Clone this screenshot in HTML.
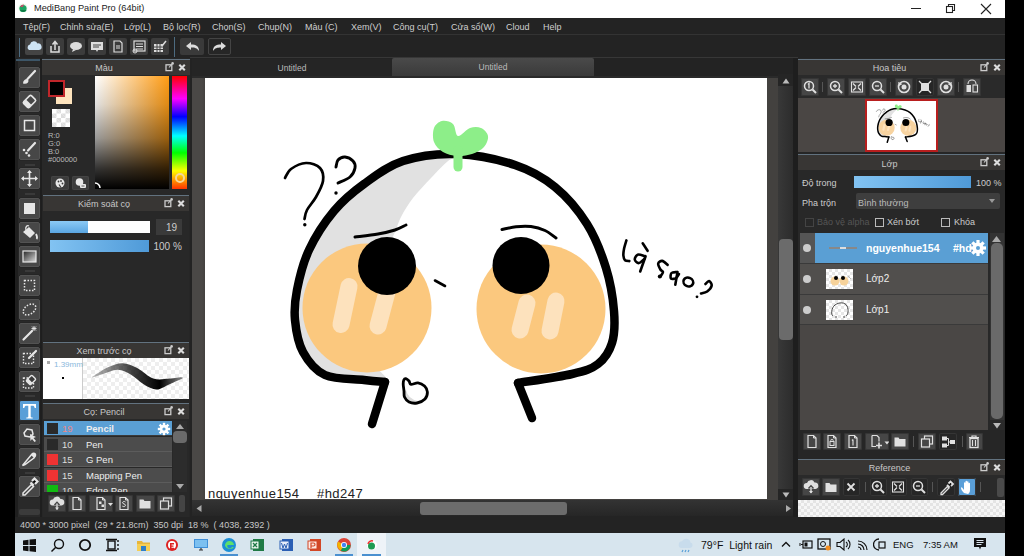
<!DOCTYPE html>
<html><head><meta charset="utf-8">
<style>
*{margin:0;padding:0;box-sizing:border-box}
html,body{width:1024px;height:556px;overflow:hidden;background:#000;font-family:"Liberation Sans",sans-serif;}
.a{position:absolute}
.t{position:absolute;white-space:nowrap;line-height:1}
#title{left:15px;top:0;width:990px;height:18px;background:#fff}
#menu{left:15px;top:18px;width:990px;height:16px;background:#232323}
#tb{left:15px;top:34px;width:990px;height:24px;background:#232323;border-top:1px solid #333}
#main{left:15px;top:58px;width:990px;height:459px;background:#232323;border-top:1px solid #353535}
#status{left:15px;top:517px;width:990px;height:16px;background:#232323}
#task{left:15px;top:533px;width:990px;height:23px;background:#d7e5ee}
.menu span{position:absolute;top:3.5px;font-size:9px;color:#cfcfcf}
.btn{position:absolute;width:19px;height:19px;background:#3c3c3c;border-radius:2px}
.ph{position:absolute;height:16px;background:#363636;border-top:1px solid #4d6b80;color:#ccc;font-size:9px;text-align:center;line-height:15px}
</style></head><body>
<svg width="0" height="0" style="position:absolute"><defs><linearGradient id="grd" x1="0" y1="0" x2="1" y2="1"><stop offset="0" stop-color="#222"/><stop offset="1" stop-color="#ddd"/></linearGradient></defs></svg>
<div id="title" class="a">
  <svg class="a" style="left:3px;top:2px" width="14" height="14"><circle cx="5" cy="6" r="4.5" fill="#eafaea"/><circle cx="5" cy="6.5" r="3.6" fill="#1ea463"/><path d="M2 5a3.6 3.6 0 0 1 4-2.5L5 5z" fill="#c0506a"/><path d="M2 8a3.6 3.6 0 0 0 6.5 0z" fill="#0d7a45"/></svg>
  <div class="t" style="left:19px;top:4px;font-size:9.2px;color:#222">MediBang Paint Pro (64bit)</div>
  <div class="a" style="left:896px;top:8px;width:10px;height:1px;background:#222"></div>
  <svg class="a" style="left:930px;top:3px" width="11" height="11"><rect x="1.5" y="3.5" width="6" height="6" fill="none" stroke="#222" stroke-width="1.1"/><path d="M3.5 3.5V1.5h6v6H7.5" fill="none" stroke="#222" stroke-width="1.1"/></svg>
  <svg class="a" style="left:965px;top:3px" width="12" height="12"><path d="M1 1l10 10M11 1L1 11" stroke="#222" stroke-width="1.1"/></svg>
</div>
<div id="menu" class="a menu">
  <span style="left:8px">Tệp(F)</span>
  <span style="left:45px">Chỉnh sửa(E)</span>
  <span style="left:109px">Lớp(L)</span>
  <span style="left:148px">Bộ lọc(R)</span>
  <span style="left:197px">Chọn(S)</span>
  <span style="left:243px">Chụp(N)</span>
  <span style="left:290px">Màu (C)</span>
  <span style="left:336px">Xem(V)</span>
  <span style="left:378px">Công cụ(T)</span>
  <span style="left:436px">Cửa sổ(W)</span>
  <span style="left:491px">Cloud</span>
  <span style="left:528px">Help</span>
</div>
<div id="tb" class="a">
  <div class="a" style="left:4px;top:3px;width:1px;height:19px;background:#4d6b80"></div>
  <div class="btn" style="left:10px;top:3px;width:18px;height:17px;background:#444"><svg width="18" height="17"><path d="M4 12 a3 3 0 0 1 1-5.5 a4 4 0 0 1 7.5-1 a3 3 0 0 1 1.5 6.5z" fill="#cfe4f5"/></svg></div>
  <div class="btn" style="left:31px;top:3px;width:18px;height:17px"><svg width="18" height="17"><path d="M5 8v6h8V8" fill="none" stroke="#ddd" stroke-width="1.5"/><path d="M9 12V4M6.5 6.5L9 3.5l2.5 3" fill="none" stroke="#ddd" stroke-width="1.5"/></svg></div>
  <div class="btn" style="left:52px;top:3px;width:18px;height:17px"><svg width="18" height="17"><ellipse cx="9" cy="8" rx="6" ry="4" fill="#ddd"/><path d="M6 11l-1 3 4-2z" fill="#ddd"/></svg></div>
  <div class="btn" style="left:73px;top:3px;width:18px;height:17px"><svg width="18" height="17"><rect x="3" y="4" width="12" height="8" fill="#ddd"/><path d="M8 12l1 2 1-2z" fill="#ddd"/><path d="M5 7h8M5 9h6" stroke="#444" stroke-width="1"/></svg></div>
  <div class="btn" style="left:94px;top:3px;width:18px;height:17px"><svg width="18" height="17"><path d="M5 3h6l2 2v9H5z" fill="none" stroke="#ddd" stroke-width="1.2"/><path d="M7 8h4M7 10h4" stroke="#ddd"/></svg></div>
  <div class="btn" style="left:115px;top:3px;width:18px;height:17px"><svg width="18" height="17"><rect x="4" y="3" width="11" height="10" fill="none" stroke="#ddd" stroke-width="1.2"/><path d="M6 6h7M6 8.5h7M6 11h7" stroke="#ddd"/><circle cx="5" cy="13" r="2" fill="none" stroke="#ddd"/></svg></div>
  <div class="btn" style="left:136px;top:3px;width:18px;height:17px"><svg width="18" height="17"><path d="M3 6h9v8H3z" fill="#ddd"/><path d="M3 9h9M3 11.5h9M6 6v8M9 6v8" stroke="#444"/><path d="M11 8l4-5" stroke="#ddd" stroke-width="1.5"/></svg></div>
  <div class="a" style="left:159px;top:2px;width:1px;height:20px;background:#4d6b80"></div>
  <div class="btn" style="left:165px;top:3px;width:24px;height:17px;background:#3a3a3a"><svg width="24" height="17"><path d="M6 8 L11 4 V6.5 C16 6.5 19 8 19 13 C17 10 15 9.5 11 9.5 V12z" fill="#ddd"/></svg></div>
  <div class="btn" style="left:193px;top:3px;width:23px;height:17px;background:#262626;border:1px solid #444"><svg width="22" height="16"><path d="M17 7 L12 3 V5.5 C7 5.5 4 7 4 12 C6 9 8 8.5 12 8.5 V11z" fill="#ddd"/></svg></div>
</div>
<div id="main" class="a"></div>
<div class="a" style="left:15px;top:58px;width:27px;height:459px;background:#292929;border-left:3px solid #1e1e1e;border-right:2px solid #1e1e1e"></div>
<div class="a" style="left:16px;top:59px;width:24px;height:2px;background:#3d5668"></div>
<div class="btn" id="tool67" style="left:19px;top:67px;width:21px;height:21px;background:#474747;border:1px solid #535353;box-shadow:0 0 0 0.5px #222"><svg width="19" height="19" viewBox="1 1 19 19" style="position:absolute;left:0;top:0"><path d="M16 4L8.5 12" stroke="#e6e6e6" stroke-width="2.2" stroke-linecap="round"/><path d="M4 16.5c0-3 2-4.5 4-4.5l1.5 1.5c0 2-1.5 4-5.5 3z" fill="#e6e6e6"/></svg></div>
<div class="btn" id="tool91" style="left:19px;top:91px;width:21px;height:21px;background:#474747;border:1px solid #535353;box-shadow:0 0 0 0.5px #222"><svg width="19" height="19" viewBox="1 1 19 19" style="position:absolute;left:0;top:0"><g transform="rotate(-45 10.5 10.5)"><rect x="5" y="6.5" width="11" height="8" rx="1.5" fill="none" stroke="#e6e6e6" stroke-width="1.6"/><rect x="5" y="6.5" width="4.5" height="8" fill="#e6e6e6"/></g></svg></div>
<div class="btn" id="tool115" style="left:19px;top:115px;width:21px;height:21px;background:#474747;border:1px solid #535353;box-shadow:0 0 0 0.5px #222"><svg width="19" height="19" viewBox="1 1 19 19" style="position:absolute;left:0;top:0"><rect x="5.5" y="5.5" width="10" height="10" fill="none" stroke="#e6e6e6" stroke-width="1.5"/></svg></div>
<div class="btn" id="tool139" style="left:19px;top:139px;width:21px;height:21px;background:#474747;border:1px solid #535353;box-shadow:0 0 0 0.5px #222"><svg width="19" height="19" viewBox="1 1 19 19" style="position:absolute;left:0;top:0"><path d="M16 4l-7 7.5" stroke="#e6e6e6" stroke-width="2.2" stroke-linecap="round"/><circle cx="5" cy="11" r="1.3" fill="#e6e6e6"/><circle cx="7.5" cy="14" r="1.3" fill="#e6e6e6"/><circle cx="10" cy="16.5" r="1.3" fill="#e6e6e6"/></svg></div>
<div class="btn" id="tool168" style="left:19px;top:168px;width:21px;height:21px;background:#474747;border:1px solid #535353;box-shadow:0 0 0 0.5px #222"><svg width="19" height="19" viewBox="1 1 19 19" style="position:absolute;left:0;top:0"><path d="M10.5 3v15M3 10.5h15" stroke="#e6e6e6" stroke-width="1.6"/><path d="M10.5 2l-2.5 3h5zM10.5 19l-2.5-3h5zM2 10.5l3-2.5v5zM19 10.5l-3-2.5v5z" fill="#e6e6e6"/></svg></div>
<div class="btn" id="tool198" style="left:19px;top:198px;width:21px;height:21px;background:#474747;border:1px solid #535353;box-shadow:0 0 0 0.5px #222"><svg width="19" height="19" viewBox="1 1 19 19" style="position:absolute;left:0;top:0"><rect x="5" y="5" width="11" height="11" fill="#e6e6e6"/></svg></div>
<div class="btn" id="tool222" style="left:19px;top:222px;width:21px;height:21px;background:#474747;border:1px solid #535353;box-shadow:0 0 0 0.5px #222"><svg width="19" height="19" viewBox="1 1 19 19" style="position:absolute;left:0;top:0"><path d="M4 10l6-5 6 6-5 5z" fill="#e6e6e6"/><path d="M7 8c-1-3 1-5 3-4" fill="none" stroke="#e6e6e6" stroke-width="1.3"/><path d="M17 12c1 2 1.5 4 0.5 5" stroke="#e6e6e6" stroke-width="1.8" fill="none"/></svg></div>
<div class="btn" id="tool246" style="left:19px;top:246px;width:21px;height:21px;background:#474747;border:1px solid #535353;box-shadow:0 0 0 0.5px #222"><svg width="19" height="19" viewBox="1 1 19 19" style="position:absolute;left:0;top:0"><rect x="4" y="5" width="13" height="11" fill="url(#grd)" stroke="#e6e6e6" stroke-width="1.2"/></svg></div>
<div class="btn" id="tool275" style="left:19px;top:275px;width:21px;height:21px;background:#474747;border:1px solid #535353;box-shadow:0 0 0 0.5px #222"><svg width="19" height="19" viewBox="1 1 19 19" style="position:absolute;left:0;top:0"><rect x="5.5" y="5.5" width="10" height="10" fill="none" stroke="#e6e6e6" stroke-width="1.5" stroke-dasharray="1.5 1.5"/></svg></div>
<div class="btn" id="tool299" style="left:19px;top:299px;width:21px;height:21px;background:#474747;border:1px solid #535353;box-shadow:0 0 0 0.5px #222"><svg width="19" height="19" viewBox="1 1 19 19" style="position:absolute;left:0;top:0"><ellipse cx="10.5" cy="10.5" rx="7" ry="4.5" transform="rotate(-35 10.5 10.5)" fill="none" stroke="#e6e6e6" stroke-width="1.5" stroke-dasharray="1.5 1.5"/></svg></div>
<div class="btn" id="tool323" style="left:19px;top:323px;width:21px;height:21px;background:#474747;border:1px solid #535353;box-shadow:0 0 0 0.5px #222"><svg width="19" height="19" viewBox="1 1 19 19" style="position:absolute;left:0;top:0"><path d="M4.5 16.5L13 8" stroke="#e6e6e6" stroke-width="2.2" stroke-linecap="round"/><path d="M15 3v5M12.5 5.5h5M13 3.5l4 4M17 3.5l-4 4" stroke="#e6e6e6" stroke-width="0.9"/></svg></div>
<div class="btn" id="tool347" style="left:19px;top:347px;width:21px;height:21px;background:#474747;border:1px solid #535353;box-shadow:0 0 0 0.5px #222"><svg width="19" height="19" viewBox="1 1 19 19" style="position:absolute;left:0;top:0"><rect x="4.5" y="6.5" width="10" height="10" fill="none" stroke="#e6e6e6" stroke-width="1.4" stroke-dasharray="1.5 1.5"/><path d="M17 4l-7 7" stroke="#e6e6e6" stroke-width="2.2" stroke-linecap="round"/></svg></div>
<div class="btn" id="tool371" style="left:19px;top:371px;width:21px;height:21px;background:#474747;border:1px solid #535353;box-shadow:0 0 0 0.5px #222"><svg width="19" height="19" viewBox="1 1 19 19" style="position:absolute;left:0;top:0"><rect x="4.5" y="7" width="10" height="10" fill="none" stroke="#e6e6e6" stroke-width="1.4" stroke-dasharray="1.5 1.5"/><g transform="rotate(-45 12 9)"><rect x="8" y="6" width="8" height="6" rx="1" fill="#3b3b3b" stroke="#e6e6e6" stroke-width="1.4"/><rect x="8" y="6" width="3" height="6" fill="#e6e6e6"/></g></svg></div>
<div class="btn" id="tool400" style="left:19px;top:400px;width:21px;height:21px;background:#5a9fd8;border:1px solid #2e2e2e"><svg width="19" height="19" viewBox="1 1 19 19" style="position:absolute;left:0;top:0"><path d="M4 4h13v4h-1.3c-.3-1.6-.8-2.2-2.4-2.2h-1.6v10.4c0 1 .4 1.3 2 1.3V18.5H7.3V17.5c1.6 0 2-.3 2-1.3V5.8H7.7c-1.6 0-2.1.6-2.4 2.2H4z" fill="#fff"/></svg></div>
<div class="btn" id="tool424" style="left:19px;top:424px;width:21px;height:21px;background:#474747;border:1px solid #535353;box-shadow:0 0 0 0.5px #222"><svg width="19" height="19" viewBox="1 1 19 19" style="position:absolute;left:0;top:0"><path d="M5 9l3-4 5 1 1 4-3 3-5-1z" fill="none" stroke="#e6e6e6" stroke-width="1.5"/><path d="M11 10l6 3-2.5 1 2.5 3-1.5 1-2.5-3-1.5 2z" fill="#e6e6e6"/></svg></div>
<div class="btn" id="tool448" style="left:19px;top:448px;width:21px;height:21px;background:#474747;border:1px solid #535353;box-shadow:0 0 0 0.5px #222"><svg width="19" height="19" viewBox="1 1 19 19" style="position:absolute;left:0;top:0"><path d="M3.5 17.5L13 6c1-1 3-1 3.5.5s-.5 2.5-1.5 3.5L6 16.5z" fill="none" stroke="#e6e6e6" stroke-width="1.5"/><path d="M13 6c1-1 3-1 3.5.5s-.5 2.5-1.5 3.5l-3-3z" fill="#e6e6e6"/></svg></div>
<div class="btn" id="tool476" style="left:19px;top:476px;width:21px;height:21px;background:#474747;border:1px solid #535353;box-shadow:0 0 0 0.5px #222"><svg width="19" height="19" viewBox="1 1 19 19" style="position:absolute;left:0;top:0"><path d="M4 17l8.5-8.5 2 2L6 19H4z" fill="none" stroke="#e6e6e6" stroke-width="1.5"/><path d="M11.5 6.5l3 3M13 5l2.5-2.5 3 3L16 8" stroke="#e6e6e6" stroke-width="2.2"/></svg></div>
<div class="a" style="left:25px;top:164px;width:10px;height:2px;background:#3a3a3a"></div>
<div class="a" style="left:25px;top:193px;width:10px;height:2px;background:#3a3a3a"></div>
<div class="a" style="left:25px;top:270px;width:10px;height:2px;background:#3a3a3a"></div>
<div class="a" style="left:25px;top:395px;width:10px;height:2px;background:#3a3a3a"></div>
<div class="a" style="left:25px;top:472px;width:10px;height:2px;background:#3a3a3a"></div>
<div class="a" style="left:19px;top:509px;width:21px;height:6px;background:#3b3b3b;border-radius:2px"></div>
<div class="a" style="left:42px;top:58px;width:148px;height:459px;background:#262626"></div>
<div class="a" style="left:42px;top:59px;width:148px;height:16px;background:#383634;border-top:1px solid #62727f"></div><div class="t" style="left:42px;top:64px;width:124px;text-align:center;font-size:9px;color:#c8c8c8">Màu</div><svg class="a" style="left:164px;top:61px" width="24" height="12"><rect x="2" y="3.8" width="5.8" height="5.8" fill="none" stroke="#ccc" stroke-width="1.3"/><path d="M5 6.5L8 3" stroke="#ccc" stroke-width="1.1"/><circle cx="8.6" cy="2.4" r="1.3" fill="#ccc"/><path d="M15.3 3.8l5.5 5.5M20.8 3.8l-5.5 5.5" stroke="#ddd" stroke-width="2.1"/></svg>
<div class="a" style="left:42px;top:75px;width:148px;height:120px;background:#282828"></div>
<div class="a" style="left:56px;top:88px;width:16px;height:16px;background:#fde3bd"></div>
<div class="a" style="left:48px;top:80px;width:17px;height:17px;background:#000;border:2px solid #c0262a"></div>
<div class="a" style="left:52px;top:109px;width:18px;height:18px;background:#fff;background-image:linear-gradient(45deg,#ddd 25%,transparent 25%,transparent 75%,#ddd 75%),linear-gradient(45deg,#ddd 25%,transparent 25%,transparent 75%,#ddd 75%);background-size:9px 9px;background-position:0 0,4.5px 4.5px"></div>
<div class="t" style="left:48px;top:132px;font-size:7.5px;color:#bbb">R:0</div>
<div class="t" style="left:48px;top:140px;font-size:7.5px;color:#bbb">G:0</div>
<div class="t" style="left:48px;top:148px;font-size:7.5px;color:#bbb">B:0</div>
<div class="t" style="left:48px;top:156px;font-size:7.5px;color:#bbb">#000000</div>
<div class="btn" style="left:51px;top:176px;width:18px;height:14px;background:#3c3c3c;box-shadow:inset 0 0 0 1px #444"><svg width="18" height="14" style="position:absolute;left:0;top:0"><circle cx="9" cy="7" r="4.5" fill="#e8e8e8"/><circle cx="7.5" cy="5.5" r="0.9" fill="#3a3a3a"/><circle cx="10" cy="5" r="0.9" fill="#3a3a3a"/><circle cx="11.5" cy="7.5" r="0.9" fill="#3a3a3a"/><path d="M8 8.5l2 3" stroke="#3a3a3a" stroke-width="1.2"/></svg></div>
<div class="btn" style="left:72px;top:176px;width:17px;height:14px;background:#3c3c3c;box-shadow:inset 0 0 0 1px #444"><svg width="17" height="14" style="position:absolute;left:0;top:0"><circle cx="7.5" cy="6" r="3.8" fill="#e8e8e8"/><rect x="8" y="8" width="6" height="4" rx="1" fill="#e8e8e8"/><path d="M9.5 10h3" stroke="#3a3a3a" stroke-width="0.8"/></svg></div>
<div class="a" style="left:95px;top:76px;width:74px;height:113px;background:linear-gradient(to bottom,rgba(0,0,0,0) 0%,rgba(0,0,0,.12) 25%,rgba(0,0,0,.4) 55%,rgba(0,0,0,.8) 82%,#000 100%),linear-gradient(to right,#fff,#ff9c14)"></div>
<div class="a" style="left:172px;top:76px;width:15px;height:113px;background:linear-gradient(to bottom,#f00 0%,#f0f 20%,#00f 36%,#0ff 53%,#0f0 68%,#ff0 84%,#f30 100%)"></div>
<div class="a" style="left:175px;top:173px;width:10px;height:10px;border-radius:50%;border:2px solid #f5d89a"></div>
<svg class="a" style="left:93px;top:181px" width="10" height="10"><path d="M2 2a5 5 0 0 1 5 5" fill="none" stroke="#fff" stroke-width="1.5"/></svg>
<div class="a" style="left:43px;top:195px;width:146px;height:16px;background:#383634;border-top:1px solid #62727f"></div><div class="t" style="left:43px;top:200px;width:122px;text-align:center;font-size:9px;color:#c8c8c8">Kiểm soát cọ</div><svg class="a" style="left:163px;top:197px" width="24" height="12"><rect x="2" y="3.8" width="5.8" height="5.8" fill="none" stroke="#ccc" stroke-width="1.3"/><path d="M5 6.5L8 3" stroke="#ccc" stroke-width="1.1"/><circle cx="8.6" cy="2.4" r="1.3" fill="#ccc"/><path d="M15.3 3.8l5.5 5.5M20.8 3.8l-5.5 5.5" stroke="#ddd" stroke-width="2.1"/></svg>
<div class="a" style="left:43px;top:211px;width:146px;height:130px;background:#282828"></div>
<div class="a" style="left:50px;top:221px;width:100px;height:12px;background:#fff"></div>
<div class="a" style="left:50px;top:221px;width:38px;height:12px;background:linear-gradient(#8ccaf5,#5aa6e2)"></div>
<div class="a" style="left:156px;top:219px;width:26px;height:16px;background:#3a3a3a"></div>
<div class="t" style="left:156px;top:222.5px;width:21px;text-align:right;font-size:10px;color:#ccc">19</div>
<div class="a" style="left:50px;top:240px;width:99px;height:12px;background:linear-gradient(to right,#82c3f2,#4f9ad8)"></div>
<div class="t" style="left:153.5px;top:241.5px;font-size:10px;color:#ccc">100 %</div>
<div class="a" style="left:43px;top:342px;width:146px;height:16px;background:#383634;border-top:1px solid #62727f"></div><div class="t" style="left:43px;top:347px;width:122px;text-align:center;font-size:9px;color:#c8c8c8">Xem trước cọ</div><svg class="a" style="left:163px;top:344px" width="24" height="12"><rect x="2" y="3.8" width="5.8" height="5.8" fill="none" stroke="#ccc" stroke-width="1.3"/><path d="M5 6.5L8 3" stroke="#ccc" stroke-width="1.1"/><circle cx="8.6" cy="2.4" r="1.3" fill="#ccc"/><path d="M15.3 3.8l5.5 5.5M20.8 3.8l-5.5 5.5" stroke="#ddd" stroke-width="2.1"/></svg>
<div class="a" style="left:43px;top:358px;width:146px;height:41px;background:#fff;background-image:linear-gradient(45deg,#eee 25%,transparent 25%,transparent 75%,#eee 75%),linear-gradient(45deg,#eee 25%,transparent 25%,transparent 75%,#eee 75%);background-size:8px 8px;background-position:0 0,4px 4px"></div>
<div class="a" style="left:43px;top:358px;width:40px;height:41px;background:#fff;border-right:1px solid #ccc"></div>
<div class="t" style="left:54px;top:361px;font-size:8px;color:#8ab8dc">1.39mm</div>
<div class="a" style="left:47px;top:361px;width:3px;height:3px;background:#aaa"></div>
<div class="a" style="left:62px;top:377px;width:2px;height:2px;background:#000"></div>
<svg class="a" style="left:83px;top:358px" width="106" height="41"><defs><linearGradient id="bg1" x1="0" x2="1"><stop offset="0" stop-color="#000" stop-opacity="0.25"/><stop offset="0.45" stop-color="#000" stop-opacity="0.75"/><stop offset="0.75" stop-color="#000"/><stop offset="1" stop-color="#000" stop-opacity="0.45"/></linearGradient></defs><path d="M8.8 19.0 C11.5 17.4 19.9 11.5 25.0 9.2 C30.1 6.9 34.7 5.1 39.6 5.2 C44.5 5.3 49.1 7.4 54.2 10.0 C59.3 12.6 65.0 18.8 70.4 20.6 C75.8 22.4 81.8 20.9 86.6 20.6 C91.4 20.3 97.3 19.3 99.5 19.0 L99.5 20.6 C97.3 21.6 90.9 24.5 86.6 26.3 C82.3 28.1 77.9 31.6 73.6 31.6 C69.3 31.6 64.9 28.8 60.6 26.3 C56.3 23.8 52.0 18.9 47.7 16.5 C43.4 14.1 39.6 11.7 34.7 11.7 C29.8 11.7 22.8 15.2 18.5 16.5 C14.2 17.9 10.4 19.2 8.8 19.8Z" fill="url(#bg1)"/></svg>
<div class="a" style="left:43px;top:403px;width:146px;height:16px;background:#383634;border-top:1px solid #62727f"></div><div class="t" style="left:43px;top:408px;width:122px;text-align:center;font-size:9px;color:#c8c8c8">Cọ: Pencil</div><svg class="a" style="left:163px;top:405px" width="24" height="12"><rect x="2" y="3.8" width="5.8" height="5.8" fill="none" stroke="#ccc" stroke-width="1.3"/><path d="M5 6.5L8 3" stroke="#ccc" stroke-width="1.1"/><circle cx="8.6" cy="2.4" r="1.3" fill="#ccc"/><path d="M15.3 3.8l5.5 5.5M20.8 3.8l-5.5 5.5" stroke="#ddd" stroke-width="2.1"/></svg>
<div class="a" style="left:43px;top:419px;width:146px;height:98px;background:#282828"></div>
<div class="a" style="left:44px;top:421px;width:128px;height:71px;overflow:hidden">
<div class="a" style="left:0;top:0.0px;width:128px;height:15px;background:#5a9fd4;border-bottom:1px solid #3a3a3a"></div>
<div class="a" style="left:3px;top:2.0px;width:11px;height:11px;background:#2a2a2a"></div>
<div class="t" style="left:18px;top:3.0px;font-size:9.5px;color:#e88">19</div>
<div class="t" style="left:42px;top:3.0px;font-size:9.5px;color:#eee;font-weight:bold">Pencil</div>
<div class="a" style="left:0;top:15.5px;width:128px;height:15px;background:#4c4c4c;border-bottom:1px solid #5c5c5c"></div>
<div class="a" style="left:3px;top:17.5px;width:11px;height:11px;background:#2a2a2a"></div>
<div class="t" style="left:18px;top:18.5px;font-size:9.5px;color:#ddd">10</div>
<div class="t" style="left:42px;top:18.5px;font-size:9.5px;color:#eee;font-weight:normal">Pen</div>
<div class="a" style="left:0;top:31.0px;width:128px;height:15px;background:#4c4c4c;border-bottom:1px solid #5c5c5c"></div>
<div class="a" style="left:3px;top:33.0px;width:11px;height:11px;background:#e33"></div>
<div class="t" style="left:18px;top:34.0px;font-size:9.5px;color:#ddd">15</div>
<div class="t" style="left:42px;top:34.0px;font-size:9.5px;color:#eee;font-weight:normal">G Pen</div>
<div class="a" style="left:0;top:46.5px;width:128px;height:15px;background:#4c4c4c;border-bottom:1px solid #5c5c5c"></div>
<div class="a" style="left:3px;top:48.5px;width:11px;height:11px;background:#e33"></div>
<div class="t" style="left:18px;top:49.5px;font-size:9.5px;color:#ddd">15</div>
<div class="t" style="left:42px;top:49.5px;font-size:9.5px;color:#eee;font-weight:normal">Mapping Pen</div>
<div class="a" style="left:0;top:62.0px;width:128px;height:15px;background:#4c4c4c;border-bottom:1px solid #5c5c5c"></div>
<div class="a" style="left:3px;top:64.0px;width:11px;height:11px;background:#1b1"></div>
<div class="t" style="left:18px;top:65.0px;font-size:9.5px;color:#ddd">10</div>
<div class="t" style="left:42px;top:65.0px;font-size:9.5px;color:#eee;font-weight:normal">Edge Pen</div>
</div>
<svg class="a" style="left:157px;top:422px" width="14" height="14"><g transform="translate(7 7)" fill="#fff"><rect x="-1.2" y="-6.2" width="2.4" height="3" transform="rotate(0)"/><rect x="-1.2" y="-6.2" width="2.4" height="3" transform="rotate(45)"/><rect x="-1.2" y="-6.2" width="2.4" height="3" transform="rotate(90)"/><rect x="-1.2" y="-6.2" width="2.4" height="3" transform="rotate(135)"/><rect x="-1.2" y="-6.2" width="2.4" height="3" transform="rotate(180)"/><rect x="-1.2" y="-6.2" width="2.4" height="3" transform="rotate(225)"/><rect x="-1.2" y="-6.2" width="2.4" height="3" transform="rotate(270)"/><rect x="-1.2" y="-6.2" width="2.4" height="3" transform="rotate(315)"/><circle r="4.2"/></g><circle cx="7" cy="7" r="1.6" fill="#5a9fd4"/></svg><div class="a" style="left:173px;top:421px;width:14px;height:71px;background:#2c2c2c"></div><svg class="a" style="left:173px;top:422px" width="14" height="9"><path d="M3 7h8l-4-5z" fill="#aaa"/></svg><div class="a" style="left:173px;top:431px;width:14px;height:12px;background:#6a6a6a;border-radius:4px"></div><svg class="a" style="left:173px;top:482px" width="14" height="9"><path d="M3 2h8l-4 5z" fill="#aaa"/></svg>
<div class="btn" style="left:48px;top:495px;width:18px;height:17px;background:#464646;box-shadow:inset 0 0 0 1px #353535"><svg width="18" height="17" style="position:absolute;left:0;top:0"><g transform="translate(0 -0.5)"><path d="M4.5 11a3 3 0 0 1 .5-6a4 4 0 0 1 7.5-.5a3 3 0 0 1 1 6.5z" fill="#e0e0e0"/><path d="M9 8v7M6.5 10.5L9 8l2.5 2.5" stroke="#464646" stroke-width="1.6" fill="none"/><path d="M9 9v6" stroke="#e0e0e0" stroke-width="1.4"/><path d="M7 13l2 2.5 2-2.5" fill="#e0e0e0"/></g></svg></div>
<div class="btn" style="left:68px;top:495px;width:18px;height:17px;background:#464646;box-shadow:inset 0 0 0 1px #353535"><svg width="18" height="17" style="position:absolute;left:0;top:0"><g transform="translate(0 -0.5)"><path d="M5 3h5.5L13 5.5V15H5z" fill="none" stroke="#e0e0e0" stroke-width="1.2"/><path d="M10.5 3v2.5H13" fill="none" stroke="#e0e0e0" stroke-width="1"/></g></svg></div>
<div class="btn" style="left:89px;top:495px;width:24px;height:17px;background:#464646;box-shadow:inset 0 0 0 1px #353535"><svg width="24" height="17" style="position:absolute;left:0;top:0"><g transform="translate(3 -0.5)"><path d="M5 3h5.5L13 5.5V15H5z" fill="none" stroke="#e0e0e0" stroke-width="1.2"/><path d="M10.5 3v2.5H13" fill="none" stroke="#e0e0e0" stroke-width="1"/><rect x="7" y="7" width="2.5" height="2.5" fill="#e0e0e0"/><rect x="9.5" y="10" width="2.5" height="2.5" fill="#e0e0e0"/><path d="M16 8.5h5l-2.5 3z" fill="#e0e0e0"/></g></svg></div>
<div class="btn" style="left:115px;top:495px;width:18px;height:17px;background:#464646;box-shadow:inset 0 0 0 1px #353535"><svg width="18" height="17" style="position:absolute;left:0;top:0"><g transform="translate(0 -0.5)"><path d="M5 3h5.5L13 5.5V15H5z" fill="none" stroke="#e0e0e0" stroke-width="1.2"/><path d="M10.5 3v2.5H13" fill="none" stroke="#e0e0e0" stroke-width="1"/><path d="M10.5 7.5c-1-1-3-.5-3 .8s3 .9 3 2.4-2.2 1.8-3.2.9" fill="none" stroke="#e0e0e0" stroke-width="1"/></g></svg></div>
<div class="btn" style="left:136px;top:495px;width:19px;height:17px;background:#464646;box-shadow:inset 0 0 0 1px #353535"><svg width="19" height="17" style="position:absolute;left:0;top:0"><g transform="translate(0 -0.5)"><path d="M3.5 5h4l1 1.5h6V14h-11z" fill="#e0e0e0"/></g></svg></div>
<div class="btn" style="left:157px;top:495px;width:18px;height:17px;background:#464646;box-shadow:inset 0 0 0 1px #353535"><svg width="18" height="17" style="position:absolute;left:0;top:0"><g transform="translate(0 -0.5)"><rect x="6.5" y="3.5" width="8" height="8" fill="none" stroke="#e0e0e0" stroke-width="1.2"/><rect x="3.5" y="6.5" width="8" height="8" fill="#464646" stroke="#e0e0e0" stroke-width="1.2"/></g></svg></div>
<div class="a" style="left:179px;top:495px;width:6px;height:17px;background:#444;border-radius:2px"></div>
<div class="a" style="left:190px;top:58px;width:608px;height:459px;background:#232323"></div>
<div class="a" style="left:190px;top:57px;width:608px;height:1px;background:#373737"></div>
<div class="a" style="left:192px;top:59px;width:200px;height:17px;background:#252525"></div>
<div class="t" style="left:192px;top:64px;width:200px;text-align:center;font-size:8.5px;color:#bbb">Untitled</div>
<div class="a" style="left:392px;top:58px;width:202px;height:18px;background:linear-gradient(#4a4a4a,#3a3a3a);border-radius:2px 2px 0 0"></div>
<div class="t" style="left:392px;top:63px;width:202px;text-align:center;font-size:8.5px;color:#bbb">Untitled</div>
<div class="a" style="left:192px;top:76px;width:601px;height:424px;background:linear-gradient(to right,#4a4846 0,#4a4846 10px,#43413f 13px,#43413f 586px,#4a4846 586px)"></div>
<div class="a" style="left:192px;top:76px;width:586px;height:2px;background:#2a2a2a"></div>
<div id="canvas" class="a" style="left:205px;top:78px;width:562px;height:421px;background:#fff;overflow:hidden"><!--DRAW--><svg width="562" height="421" viewBox="205 78 562 421"><path d="M456.0 156.0 C448.0 156.2 417.7 156.3 400.0 162.0 C382.3 167.7 364.3 177.2 350.0 190.0 C335.7 202.8 322.8 221.3 314.0 239.0 C305.2 256.7 299.3 278.3 297.0 296.0 C294.7 313.7 295.3 332.2 300.0 345.0 C304.7 357.8 310.8 367.2 325.0 373.0 C339.2 378.8 379.2 383.8 385.0 380.0 C390.8 376.2 365.8 363.3 360.0 350.0 C354.2 336.7 347.5 315.3 350.0 300.0 C352.5 284.7 368.0 268.3 375.0 258.0 C382.0 247.7 387.7 244.8 392.0 238.0 C396.3 231.2 397.5 223.7 401.0 217.0 C404.5 210.3 408.0 204.5 413.0 198.0 C418.0 191.5 425.2 184.2 431.0 178.0 C436.8 171.8 443.8 164.7 448.0 161.0 C452.2 157.3 464.0 155.8 456.0 156.0Z" fill="#e1e1e1"/>
<circle cx="367" cy="308" r="64.5" fill="#fbc87e"/>
<circle cx="541" cy="309" r="64.5" fill="#fbc87e"/>
<path d="M349 286.5L341 324.5" stroke="#fde2bd" stroke-width="17" stroke-linecap="round"/>
<path d="M387 292L378 326" stroke="#fde2bd" stroke-width="17" stroke-linecap="round"/>
<path d="M527 303L520 330" stroke="#fde2bd" stroke-width="17" stroke-linecap="round"/>
<path d="M556 301L550 331" stroke="#fde2bd" stroke-width="17" stroke-linecap="round"/>
<circle cx="387" cy="266" r="29" fill="#000"/>
<circle cx="521" cy="265.5" r="28.5" fill="#000"/>
<path d="M372 424L385 382" stroke="#000" stroke-width="8.5" stroke-linecap="round" fill="none"/>
<path d="M385.0 382.0 C381.5 381.7 374.0 381.2 364.0 380.0 C354.0 378.8 335.2 379.7 325.0 375.0 C314.8 370.3 308.0 361.2 303.0 352.0 C298.0 342.8 296.0 330.3 295.0 320.0 C294.0 309.7 294.7 301.7 297.0 290.0 C299.3 278.3 302.8 263.2 309.0 250.0 C315.2 236.8 324.8 222.0 334.0 211.0 C343.2 200.0 352.5 192.3 364.0 184.0 C375.5 175.7 387.7 166.0 403.0 161.0 C418.3 156.0 437.3 153.3 456.0 154.0 C474.7 154.7 498.5 159.5 515.0 165.0 C531.5 170.5 543.0 177.2 555.0 187.0 C567.0 196.8 578.5 210.5 587.0 224.0 C595.5 237.5 601.5 253.5 606.0 268.0 C610.5 282.5 613.0 298.5 614.0 311.0 C615.0 323.5 614.7 334.2 612.0 343.0 C609.3 351.8 604.7 358.8 598.0 364.0 C591.3 369.2 585.3 370.8 572.0 374.0 C558.7 377.2 527.0 381.5 518.0 383.0" stroke="#000" stroke-width="8.5" stroke-linecap="round" stroke-linejoin="round" fill="none"/>
<path d="M518 383L532 418" stroke="#000" stroke-width="8.5" stroke-linecap="round" fill="none"/>
<path d="M458.0 136.0 C455.2 135.3 455.7 126.5 453.0 124.0 C450.3 121.5 445.2 120.3 442.0 121.0 C438.8 121.7 435.3 124.5 434.0 128.0 C432.7 131.5 432.5 138.0 434.0 142.0 C435.5 146.0 439.2 149.7 443.0 152.0 C446.8 154.3 452.2 155.7 457.0 156.0 C461.8 156.3 467.5 155.5 472.0 154.0 C476.5 152.5 481.3 150.0 484.0 147.0 C486.7 144.0 488.5 139.2 488.0 136.0 C487.5 132.8 484.0 129.3 481.0 128.0 C478.0 126.7 473.8 126.7 470.0 128.0 C466.2 129.3 460.8 136.7 458.0 136.0Z" fill="#8dee89"/>
<path d="M458 150L458 167" stroke="#8dee89" stroke-width="9" stroke-linecap="round"/>
<path d="M355.0 237.0 C358.8 236.5 371.3 235.2 378.0 234.0 C384.7 232.8 390.3 231.5 395.0 230.0 C399.7 228.5 404.2 225.8 406.0 225.0" stroke="#000" stroke-width="3" fill="none" stroke-linecap="round"/>
<path d="M502.0 229.5 C504.3 229.1 511.2 227.3 516.0 226.8 C520.8 226.3 526.2 226.0 531.0 226.6 C535.8 227.2 540.8 228.6 545.0 230.5 C549.2 232.4 554.2 236.8 556.0 238.0" stroke="#000" stroke-width="3" fill="none" stroke-linecap="round"/>
<path d="M435 280.5L445 286" stroke="#000" stroke-width="2.6" stroke-linecap="round"/>
<path d="M285.0 178.0 C286.0 176.5 287.5 171.5 291.0 169.0 C294.5 166.5 301.2 163.2 306.0 163.0 C310.8 162.8 317.2 165.0 320.0 168.0 C322.8 171.0 323.7 176.2 323.0 181.0 C322.3 185.8 318.7 192.2 316.0 197.0 C313.3 201.8 308.9 206.3 307.0 210.0 C305.1 213.7 304.9 217.5 304.5 219.0" stroke="#000" stroke-width="2.7" fill="none" stroke-linecap="round"/>
<circle cx="304.8" cy="224.8" r="1.7" fill="#000"/>
<path d="M336.0 167.0 C336.3 165.8 336.5 161.7 338.0 160.0 C339.5 158.3 342.5 156.8 345.0 157.0 C347.5 157.2 351.3 159.2 353.0 161.0 C354.7 162.8 355.5 165.3 355.0 168.0 C354.5 170.7 352.8 174.5 350.0 177.0 C347.2 179.5 340.0 182.0 338.0 183.0" stroke="#000" stroke-width="2.9" fill="none" stroke-linecap="round"/>
<circle cx="336" cy="193" r="1.7" fill="#000"/>
<path d="M405.8 378.6 C406.7 378.8 408.1 380.0 409.0 381.0 C409.9 382.0 409.5 384.1 411.0 384.4 C412.5 384.7 415.8 382.5 418.0 382.8 C420.2 383.1 422.9 384.5 424.5 386.0 C426.1 387.5 427.3 389.8 427.4 392.0 C427.5 394.2 426.7 397.2 425.0 399.0 C423.3 400.8 419.7 402.5 417.0 403.0 C414.3 403.5 411.1 403.0 409.0 402.0 C406.9 401.0 405.3 398.8 404.5 397.0 C403.7 395.2 404.2 393.2 404.0 391.0 C403.8 388.8 403.2 385.8 403.2 384.0 C403.2 382.2 403.4 380.9 403.8 380.0 C404.2 379.1 404.9 378.4 405.8 378.6Z" fill="#fff"/>
<path d="M406 390 Q408 399 418 401 L411 403 Q404 400 404.5 392z" fill="#dcdcdc"/>
<path d="M405.8 378.6 C406.7 378.8 408.1 380.0 409.0 381.0 C409.9 382.0 409.5 384.1 411.0 384.4 C412.5 384.7 415.8 382.5 418.0 382.8 C420.2 383.1 422.9 384.5 424.5 386.0 C426.1 387.5 427.3 389.8 427.4 392.0 C427.5 394.2 426.7 397.2 425.0 399.0 C423.3 400.8 419.7 402.5 417.0 403.0 C414.3 403.5 411.1 403.0 409.0 402.0 C406.9 401.0 405.3 398.8 404.5 397.0 C403.7 395.2 404.2 393.2 404.0 391.0 C403.8 388.8 403.2 385.8 403.2 384.0 C403.2 382.2 403.4 380.9 403.8 380.0 C404.2 379.1 404.9 378.4 405.8 378.6Z" fill="none" stroke="#000" stroke-width="2.8" stroke-linejoin="round"/>
<path d="M626.4 240.4 C626.0 241.8 624.5 246.4 624.0 249.0 C623.5 251.6 623.2 253.8 623.4 255.7 C623.6 257.6 624.0 259.4 625.0 260.3 C626.0 261.2 628.6 261.0 629.3 261.1" stroke="#000" stroke-width="2.6" fill="none" stroke-linecap="round" stroke-linejoin="round"/>
<path d="M642.7 243.3L647.6 250.8" stroke="#000" stroke-width="2.6" fill="none" stroke-linecap="round" stroke-linejoin="round"/>
<path d="M644.6 256.2 C643.5 255.9 639.3 254.1 637.7 254.7 C636.1 255.3 634.6 258.2 634.8 259.6 C635.0 261.0 637.1 263.2 638.7 263.1 C640.3 263.0 643.6 259.4 644.6 258.7" stroke="#000" stroke-width="2.6" fill="none" stroke-linecap="round" stroke-linejoin="round"/>
<path d="M645.6 256.2L640.2 271.5" stroke="#000" stroke-width="2.6" fill="none" stroke-linecap="round" stroke-linejoin="round"/>
<path d="M667.6 264.9 C666.7 264.2 663.8 261.1 662.2 260.9 C660.6 260.7 658.5 262.2 658.2 263.6 C657.9 265.0 659.6 268.1 660.4 269.5 C661.2 270.9 663.0 270.8 663.0 272.0 C663.0 273.2 660.8 275.8 660.4 276.5" stroke="#000" stroke-width="2.6" fill="none" stroke-linecap="round" stroke-linejoin="round"/>
<circle cx="659.8" cy="276.5" r="2" fill="#000"/>
<path d="M677.0 272.0 C676.1 272.2 672.5 271.9 671.5 273.0 C670.5 274.1 670.2 277.7 671.0 278.5 C671.8 279.3 674.7 278.8 676.0 278.0 C677.3 277.2 678.5 274.7 679.0 274.0" stroke="#000" stroke-width="2.6" fill="none" stroke-linecap="round" stroke-linejoin="round"/>
<path d="M677.5 272L675.3 284.7" stroke="#000" stroke-width="2.6" fill="none" stroke-linecap="round" stroke-linejoin="round"/>
<ellipse cx="688.3" cy="282" rx="5" ry="4.3" transform="rotate(25 688.3 282)" stroke="#000" stroke-width="2.6" fill="none"/>
<path d="M705.4 284.0 C706.0 283.5 708.0 280.8 709.0 281.1 C710.0 281.4 712.0 283.9 711.7 285.6 C711.4 287.3 709.0 290.2 707.2 291.5 C705.4 292.8 702.0 293.2 701.0 293.5" stroke="#000" stroke-width="2.6" fill="none" stroke-linecap="round" stroke-linejoin="round"/>
<circle cx="697" cy="296.8" r="1.4" fill="#000"/><text x="208" y="497.5" font-family="Liberation Sans" font-size="13" letter-spacing="0.45" fill="#222">nguyenhue154</text><text x="317" y="497.5" font-family="Liberation Sans" font-size="13" letter-spacing="0.45" fill="#222">#hd247</text></svg><!--/DRAW--></div>
<div class="a" style="left:778px;top:74px;width:15px;height:426px;background:linear-gradient(to right,#383838,#2c2c2c)"></div>
<div class="a" style="left:778px;top:74px;width:15px;height:12px;background:#252525"></div>
<svg class="a" style="left:778px;top:75px" width="15" height="11"><path d="M4.5 8.5h7l-3.5-5z" fill="#bbb"/></svg>
<div class="a" style="left:779px;top:239px;width:14px;height:101px;background:#6b6b6b;border-radius:4px"></div>
<div class="a" style="left:778px;top:489px;width:15px;height:11px;background:#252525"></div>
<svg class="a" style="left:778px;top:490px" width="15" height="10"><path d="M4.5 2.5h7l-3.5 5z" fill="#bbb"/></svg>
<div class="a" style="left:192px;top:500px;width:601px;height:16px;background:linear-gradient(#333,#262626)"></div>
<div class="a" style="left:420px;top:502px;width:147px;height:13px;background:#6c6c6c;border-radius:3px"></div>
<svg class="a" style="left:192px;top:502px" width="14" height="13"><path d="M9.5 3v7l-5-3.5z" fill="#aaa"/></svg>
<svg class="a" style="left:783px;top:502px" width="10" height="13"><path d="M3 3v7l5-3.5z" fill="#aaa"/></svg>
<div class="a" style="left:793px;top:58px;width:5px;height:459px;background:#1e1e1e"></div>
<div class="a" style="left:798px;top:58px;width:207px;height:459px;background:#262626"></div>
<div class="a" style="left:798px;top:59px;width:207px;height:16px;background:#383634;border-top:1px solid #62727f"></div><div class="t" style="left:798px;top:64px;width:183px;text-align:center;font-size:9px;color:#c8c8c8">Hoa tiêu</div><svg class="a" style="left:979px;top:61px" width="24" height="12"><rect x="2" y="3.8" width="5.8" height="5.8" fill="none" stroke="#ccc" stroke-width="1.3"/><path d="M5 6.5L8 3" stroke="#ccc" stroke-width="1.1"/><circle cx="8.6" cy="2.4" r="1.3" fill="#ccc"/><path d="M15.3 3.8l5.5 5.5M20.8 3.8l-5.5 5.5" stroke="#ddd" stroke-width="2.1"/></svg>
<div class="a" style="left:798px;top:75px;width:207px;height:23px;background:#2a2a2a"></div>
<div class="btn" style="left:801px;top:78px;width:18px;height:18px;background:#464646;box-shadow:inset 0 0 0 1px #353535"><svg width="18" height="18" style="position:absolute;left:0;top:0"><g transform="translate(0 0.0)"><circle cx="8" cy="8" r="4.5" fill="none" stroke="#e0e0e0" stroke-width="1.5"/><path d="M11.5 11.5l3.5 3.5" stroke="#e0e0e0" stroke-width="2"/><path d="M7 6.5l1-1v5" stroke="#e0e0e0" stroke-width="1.3" fill="none"/></g></svg></div>
<div class="btn" style="left:827px;top:78px;width:18px;height:18px;background:#464646;box-shadow:inset 0 0 0 1px #353535"><svg width="18" height="18" style="position:absolute;left:0;top:0"><g transform="translate(0 0.0)"><circle cx="8" cy="8" r="4.5" fill="none" stroke="#e0e0e0" stroke-width="1.5"/><path d="M11.5 11.5l3.5 3.5" stroke="#e0e0e0" stroke-width="2"/><path d="M6 8h4M8 6v4" stroke="#e0e0e0" stroke-width="1.3"/></g></svg></div>
<div class="btn" style="left:848px;top:78px;width:18px;height:18px;background:#464646;box-shadow:inset 0 0 0 1px #353535"><svg width="18" height="18" style="position:absolute;left:0;top:0"><g transform="translate(0 0.0)"><rect x="3.5" y="4" width="11" height="10" fill="none" stroke="#e0e0e0" stroke-width="1.1"/><path d="M5 5.5l3 3M13 5.5l-3 3M5 12.5l3-3M13 12.5l-3-3" stroke="#e0e0e0" stroke-width="1.3"/></g></svg></div>
<div class="btn" style="left:869px;top:78px;width:18px;height:18px;background:#464646;box-shadow:inset 0 0 0 1px #353535"><svg width="18" height="18" style="position:absolute;left:0;top:0"><g transform="translate(0 0.0)"><circle cx="8" cy="8" r="4.5" fill="none" stroke="#e0e0e0" stroke-width="1.5"/><path d="M11.5 11.5l3.5 3.5" stroke="#e0e0e0" stroke-width="2"/><path d="M6 8h4" stroke="#e0e0e0" stroke-width="1.3"/></g></svg></div>
<div class="btn" style="left:895px;top:78px;width:18px;height:18px;background:#464646;box-shadow:inset 0 0 0 1px #353535"><svg width="18" height="18" style="position:absolute;left:0;top:0"><g transform="translate(0 0.0)"><circle cx="9" cy="9" r="5.5" fill="none" stroke="#e0e0e0" stroke-width="1.6"/><circle cx="9" cy="9" r="2.5" fill="#e0e0e0"/><path d="M3 4l1 4 3.5-2z" fill="#e0e0e0"/></g></svg></div>
<div class="btn" style="left:916px;top:78px;width:18px;height:18px;background:#262626;box-shadow:inset 0 0 0 1px #353535"><svg width="18" height="18" style="position:absolute;left:0;top:0"><g transform="translate(0 0.0)"><rect x="5" y="5" width="8" height="8" fill="#e0e0e0"/><path d="M3 3l3 3M15 3l-3 3M3 15l3-3M15 15l-3-3" stroke="#e0e0e0" stroke-width="1.3"/></g></svg></div>
<div class="btn" style="left:937px;top:78px;width:18px;height:18px;background:#464646;box-shadow:inset 0 0 0 1px #353535"><svg width="18" height="18" style="position:absolute;left:0;top:0"><g transform="translate(0 0.0)"><circle cx="9" cy="9" r="5.5" fill="none" stroke="#e0e0e0" stroke-width="1.6"/><circle cx="9" cy="9" r="2.5" fill="#e0e0e0"/><path d="M15 4l-1 4-3.5-2z" fill="#e0e0e0"/></g></svg></div>
<div class="btn" style="left:963px;top:78px;width:18px;height:18px;background:#464646;box-shadow:inset 0 0 0 1px #353535"><svg width="18" height="18" style="position:absolute;left:0;top:0"><g transform="translate(0 0.0)"><rect x="3.5" y="7" width="4.5" height="7" fill="#e0e0e0"/><rect x="10" y="7" width="4.5" height="7" fill="none" stroke="#e0e0e0" stroke-width="1.1"/><path d="M5 6a4 4 0 0 1 8 0" fill="none" stroke="#e0e0e0" stroke-width="1.1"/></g></svg></div>
<div class="a" style="left:822px;top:82px;width:1px;height:10px;background:#555"></div><div class="a" style="left:890px;top:82px;width:1px;height:10px;background:#555"></div><div class="a" style="left:958px;top:82px;width:1px;height:10px;background:#555"></div>
<div class="a" style="left:798px;top:98px;width:207px;height:54px;background:#4a4644"></div>
<div id="thumb" class="a" style="left:865px;top:99px;width:73px;height:53px;background:#fff;border:2px solid #b81e1e;overflow:hidden"><!--THUMB--><svg width="69" height="49" style="position:absolute;left:0;top:0;filter:blur(0.3px)"><g transform="translate(-26.1 -11.64) scale(0.1246)"><path d="M456.0 156.0 C448.0 156.2 417.7 156.3 400.0 162.0 C382.3 167.7 364.3 177.2 350.0 190.0 C335.7 202.8 322.8 221.3 314.0 239.0 C305.2 256.7 299.3 278.3 297.0 296.0 C294.7 313.7 295.3 332.2 300.0 345.0 C304.7 357.8 310.8 367.2 325.0 373.0 C339.2 378.8 379.2 383.8 385.0 380.0 C390.8 376.2 365.8 363.3 360.0 350.0 C354.2 336.7 347.5 315.3 350.0 300.0 C352.5 284.7 368.0 268.3 375.0 258.0 C382.0 247.7 387.7 244.8 392.0 238.0 C396.3 231.2 397.5 223.7 401.0 217.0 C404.5 210.3 408.0 204.5 413.0 198.0 C418.0 191.5 425.2 184.2 431.0 178.0 C436.8 171.8 443.8 164.7 448.0 161.0 C452.2 157.3 464.0 155.8 456.0 156.0Z" fill="#e1e1e1"/>
<circle cx="367" cy="308" r="64.5" fill="#f7d3a0"/>
<circle cx="541" cy="309" r="64.5" fill="#f7d3a0"/>
<path d="M349 286.5L341 324.5" stroke="#fde2bd" stroke-width="17" stroke-linecap="round"/>
<path d="M387 292L378 326" stroke="#fde2bd" stroke-width="17" stroke-linecap="round"/>
<path d="M527 303L520 330" stroke="#fde2bd" stroke-width="17" stroke-linecap="round"/>
<path d="M556 301L550 331" stroke="#fde2bd" stroke-width="17" stroke-linecap="round"/>
<circle cx="387" cy="266" r="29" fill="#000"/>
<circle cx="521" cy="265.5" r="28.5" fill="#000"/>
<path d="M372 424L385 382" stroke="#000" stroke-width="12" stroke-linecap="round" fill="none"/>
<path d="M385.0 382.0 C381.5 381.7 374.0 381.2 364.0 380.0 C354.0 378.8 335.2 379.7 325.0 375.0 C314.8 370.3 308.0 361.2 303.0 352.0 C298.0 342.8 296.0 330.3 295.0 320.0 C294.0 309.7 294.7 301.7 297.0 290.0 C299.3 278.3 302.8 263.2 309.0 250.0 C315.2 236.8 324.8 222.0 334.0 211.0 C343.2 200.0 352.5 192.3 364.0 184.0 C375.5 175.7 387.7 166.0 403.0 161.0 C418.3 156.0 437.3 153.3 456.0 154.0 C474.7 154.7 498.5 159.5 515.0 165.0 C531.5 170.5 543.0 177.2 555.0 187.0 C567.0 196.8 578.5 210.5 587.0 224.0 C595.5 237.5 601.5 253.5 606.0 268.0 C610.5 282.5 613.0 298.5 614.0 311.0 C615.0 323.5 614.7 334.2 612.0 343.0 C609.3 351.8 604.7 358.8 598.0 364.0 C591.3 369.2 585.3 370.8 572.0 374.0 C558.7 377.2 527.0 381.5 518.0 383.0" stroke="#000" stroke-width="12" stroke-linecap="round" stroke-linejoin="round" fill="none"/>
<path d="M518 383L532 418" stroke="#000" stroke-width="12" stroke-linecap="round" fill="none"/>
<path d="M458.0 136.0 C455.2 135.3 455.7 126.5 453.0 124.0 C450.3 121.5 445.2 120.3 442.0 121.0 C438.8 121.7 435.3 124.5 434.0 128.0 C432.7 131.5 432.5 138.0 434.0 142.0 C435.5 146.0 439.2 149.7 443.0 152.0 C446.8 154.3 452.2 155.7 457.0 156.0 C461.8 156.3 467.5 155.5 472.0 154.0 C476.5 152.5 481.3 150.0 484.0 147.0 C486.7 144.0 488.5 139.2 488.0 136.0 C487.5 132.8 484.0 129.3 481.0 128.0 C478.0 126.7 473.8 126.7 470.0 128.0 C466.2 129.3 460.8 136.7 458.0 136.0Z" fill="#8dee89"/>
<path d="M458 150L458 167" stroke="#8dee89" stroke-width="9" stroke-linecap="round"/>
<path d="M355.0 237.0 C358.8 236.5 371.3 235.2 378.0 234.0 C384.7 232.8 390.3 231.5 395.0 230.0 C399.7 228.5 404.2 225.8 406.0 225.0" stroke="#000" stroke-width="3" fill="none" stroke-linecap="round"/>
<path d="M502.0 229.5 C504.3 229.1 511.2 227.3 516.0 226.8 C520.8 226.3 526.2 226.0 531.0 226.6 C535.8 227.2 540.8 228.6 545.0 230.5 C549.2 232.4 554.2 236.8 556.0 238.0" stroke="#000" stroke-width="3" fill="none" stroke-linecap="round"/>
<path d="M435 280.5L445 286" stroke="#000" stroke-width="2.6" stroke-linecap="round"/>
<path d="M285.0 178.0 C286.0 176.5 287.5 171.5 291.0 169.0 C294.5 166.5 301.2 163.2 306.0 163.0 C310.8 162.8 317.2 165.0 320.0 168.0 C322.8 171.0 323.7 176.2 323.0 181.0 C322.3 185.8 318.7 192.2 316.0 197.0 C313.3 201.8 308.9 206.3 307.0 210.0 C305.1 213.7 304.9 217.5 304.5 219.0" stroke="#000" stroke-width="2.7" fill="none" stroke-linecap="round"/>
<circle cx="304.8" cy="224.8" r="1.7" fill="#000"/>
<path d="M336.0 167.0 C336.3 165.8 336.5 161.7 338.0 160.0 C339.5 158.3 342.5 156.8 345.0 157.0 C347.5 157.2 351.3 159.2 353.0 161.0 C354.7 162.8 355.5 165.3 355.0 168.0 C354.5 170.7 352.8 174.5 350.0 177.0 C347.2 179.5 340.0 182.0 338.0 183.0" stroke="#000" stroke-width="2.9" fill="none" stroke-linecap="round"/>
<circle cx="336" cy="193" r="1.7" fill="#000"/>
<path d="M405.8 378.6 C406.7 378.8 408.1 380.0 409.0 381.0 C409.9 382.0 409.5 384.1 411.0 384.4 C412.5 384.7 415.8 382.5 418.0 382.8 C420.2 383.1 422.9 384.5 424.5 386.0 C426.1 387.5 427.3 389.8 427.4 392.0 C427.5 394.2 426.7 397.2 425.0 399.0 C423.3 400.8 419.7 402.5 417.0 403.0 C414.3 403.5 411.1 403.0 409.0 402.0 C406.9 401.0 405.3 398.8 404.5 397.0 C403.7 395.2 404.2 393.2 404.0 391.0 C403.8 388.8 403.2 385.8 403.2 384.0 C403.2 382.2 403.4 380.9 403.8 380.0 C404.2 379.1 404.9 378.4 405.8 378.6Z" fill="#fff"/>
<path d="M406 390 Q408 399 418 401 L411 403 Q404 400 404.5 392z" fill="#dcdcdc"/>
<path d="M405.8 378.6 C406.7 378.8 408.1 380.0 409.0 381.0 C409.9 382.0 409.5 384.1 411.0 384.4 C412.5 384.7 415.8 382.5 418.0 382.8 C420.2 383.1 422.9 384.5 424.5 386.0 C426.1 387.5 427.3 389.8 427.4 392.0 C427.5 394.2 426.7 397.2 425.0 399.0 C423.3 400.8 419.7 402.5 417.0 403.0 C414.3 403.5 411.1 403.0 409.0 402.0 C406.9 401.0 405.3 398.8 404.5 397.0 C403.7 395.2 404.2 393.2 404.0 391.0 C403.8 388.8 403.2 385.8 403.2 384.0 C403.2 382.2 403.4 380.9 403.8 380.0 C404.2 379.1 404.9 378.4 405.8 378.6Z" fill="none" stroke="#000" stroke-width="2.8" stroke-linejoin="round"/>
<path d="M626.4 240.4 C626.0 241.8 624.5 246.4 624.0 249.0 C623.5 251.6 623.2 253.8 623.4 255.7 C623.6 257.6 624.0 259.4 625.0 260.3 C626.0 261.2 628.6 261.0 629.3 261.1" stroke="#000" stroke-width="2.6" fill="none" stroke-linecap="round" stroke-linejoin="round"/>
<path d="M642.7 243.3L647.6 250.8" stroke="#000" stroke-width="2.6" fill="none" stroke-linecap="round" stroke-linejoin="round"/>
<path d="M644.6 256.2 C643.5 255.9 639.3 254.1 637.7 254.7 C636.1 255.3 634.6 258.2 634.8 259.6 C635.0 261.0 637.1 263.2 638.7 263.1 C640.3 263.0 643.6 259.4 644.6 258.7" stroke="#000" stroke-width="2.6" fill="none" stroke-linecap="round" stroke-linejoin="round"/>
<path d="M645.6 256.2L640.2 271.5" stroke="#000" stroke-width="2.6" fill="none" stroke-linecap="round" stroke-linejoin="round"/>
<path d="M667.6 264.9 C666.7 264.2 663.8 261.1 662.2 260.9 C660.6 260.7 658.5 262.2 658.2 263.6 C657.9 265.0 659.6 268.1 660.4 269.5 C661.2 270.9 663.0 270.8 663.0 272.0 C663.0 273.2 660.8 275.8 660.4 276.5" stroke="#000" stroke-width="2.6" fill="none" stroke-linecap="round" stroke-linejoin="round"/>
<circle cx="659.8" cy="276.5" r="2" fill="#000"/>
<path d="M677.0 272.0 C676.1 272.2 672.5 271.9 671.5 273.0 C670.5 274.1 670.2 277.7 671.0 278.5 C671.8 279.3 674.7 278.8 676.0 278.0 C677.3 277.2 678.5 274.7 679.0 274.0" stroke="#000" stroke-width="2.6" fill="none" stroke-linecap="round" stroke-linejoin="round"/>
<path d="M677.5 272L675.3 284.7" stroke="#000" stroke-width="2.6" fill="none" stroke-linecap="round" stroke-linejoin="round"/>
<ellipse cx="688.3" cy="282" rx="5" ry="4.3" transform="rotate(25 688.3 282)" stroke="#000" stroke-width="2.6" fill="none"/>
<path d="M705.4 284.0 C706.0 283.5 708.0 280.8 709.0 281.1 C710.0 281.4 712.0 283.9 711.7 285.6 C711.4 287.3 709.0 290.2 707.2 291.5 C705.4 292.8 702.0 293.2 701.0 293.5" stroke="#000" stroke-width="2.6" fill="none" stroke-linecap="round" stroke-linejoin="round"/>
<circle cx="697" cy="296.8" r="1.4" fill="#000"/></g></svg><!--/THUMB--></div>
<div class="a" style="left:798px;top:154px;width:207px;height:16px;background:#383634;border-top:1px solid #62727f"></div><div class="t" style="left:798px;top:160px;width:183px;text-align:center;font-size:9px;color:#c8c8c8">Lớp</div><svg class="a" style="left:979px;top:156px" width="24" height="12"><rect x="2" y="3.8" width="5.8" height="5.8" fill="none" stroke="#ccc" stroke-width="1.3"/><path d="M5 6.5L8 3" stroke="#ccc" stroke-width="1.1"/><circle cx="8.6" cy="2.4" r="1.3" fill="#ccc"/><path d="M15.3 3.8l5.5 5.5M20.8 3.8l-5.5 5.5" stroke="#ddd" stroke-width="2.1"/></svg>
<div class="a" style="left:798px;top:170px;width:207px;height:260px;background:#282828"></div>
<div class="t" style="left:802px;top:179px;font-size:9px;color:#ccc">Độ trong</div>
<div class="a" style="left:854px;top:176px;width:117px;height:12px;background:linear-gradient(to right,#82c3f2,#4f9ad8)"></div>
<div class="t" style="left:976px;top:179px;font-size:9px;color:#ccc">100 %</div>
<div class="t" style="left:802px;top:198.5px;font-size:9px;color:#ccc">Pha trộn</div>
<div class="a" style="left:856px;top:193px;width:144px;height:16px;background:#3e3e3e;border-radius:2px"></div>
<div class="t" style="left:858px;top:198.5px;font-size:9px;color:#bbb">Bình thường</div>
<svg class="a" style="left:988px;top:198px" width="8" height="6"><path d="M1 1h6l-3 4z" fill="#999"/></svg>
<div class="a" style="left:805px;top:218px;width:9px;height:9px;border:1px solid #444"></div>
<div class="t" style="left:817px;top:218px;font-size:9px;color:#555">Bảo vệ alpha</div>
<div class="a" style="left:875px;top:218px;width:9px;height:9px;border:1px solid #bbb"></div>
<div class="t" style="left:887px;top:218px;font-size:9px;color:#ccc">Xén bớt</div>
<div class="a" style="left:941px;top:218px;width:9px;height:9px;border:1px solid #bbb"></div>
<div class="t" style="left:954px;top:218px;font-size:9px;color:#ccc">Khóa</div>
<div class="a" style="left:800px;top:233px;width:188px;height:197px;background:#4a4745"></div>
<div class="a" style="left:800px;top:233px;width:15px;height:30px;background:#555"></div>
<div class="a" style="left:815px;top:233px;width:173px;height:30px;background:#5a9fd4"></div>
<div class="a" style="left:800px;top:263px;width:188px;height:1px;background:#3a3a3a"></div>
<div class="a" style="left:800px;top:264px;width:188px;height:30px;background:#514f4d"></div>
<div class="a" style="left:800px;top:294px;width:188px;height:1px;background:#3a3a3a"></div>
<div class="a" style="left:800px;top:295px;width:188px;height:29px;background:#514f4d"></div>
<div class="a" style="left:800px;top:324px;width:188px;height:1px;background:#3a3a3a"></div>
<div class="a" style="left:803px;top:244px;width:8px;height:8px;border-radius:50%;background:#ccc"></div>
<div class="a" style="left:803px;top:275px;width:8px;height:8px;border-radius:50%;background:#ccc"></div>
<div class="a" style="left:803px;top:306px;width:8px;height:8px;border-radius:50%;background:#ccc"></div>
<div class="a" style="left:829px;top:247px;width:28px;height:2px;background:linear-gradient(to right,#888 0,#888 40%,#ddd 40%,#ddd 60%,#888 60%)"></div>
<div class="t" style="left:866px;top:243px;font-size:10.5px;color:#fff;font-weight:bold">nguyenhue154</div>
<div class="t" style="left:953px;top:243px;font-size:10.5px;color:#fff;font-weight:bold">#hd</div><svg class="a" style="left:969px;top:239px" width="18" height="18"><g transform="translate(9 9)" fill="#fff"><rect x="-1.6" y="-8" width="3.2" height="4" transform="rotate(0)"/><rect x="-1.6" y="-8" width="3.2" height="4" transform="rotate(45)"/><rect x="-1.6" y="-8" width="3.2" height="4" transform="rotate(90)"/><rect x="-1.6" y="-8" width="3.2" height="4" transform="rotate(135)"/><rect x="-1.6" y="-8" width="3.2" height="4" transform="rotate(180)"/><rect x="-1.6" y="-8" width="3.2" height="4" transform="rotate(225)"/><rect x="-1.6" y="-8" width="3.2" height="4" transform="rotate(270)"/><rect x="-1.6" y="-8" width="3.2" height="4" transform="rotate(315)"/><circle r="5.5"/></g><circle cx="9" cy="9" r="2" fill="#5a9fd4"/></svg>
<div class="a" style="left:826px;top:269px;width:27px;height:20px;background-color:#fff;background-image:linear-gradient(45deg,#e6e6e6 25%,transparent 25%,transparent 75%,#e6e6e6 75%),linear-gradient(45deg,#e6e6e6 25%,transparent 25%,transparent 75%,#e6e6e6 75%);background-size:6px 6px;background-position:0 0,3px 3px;overflow:hidden"><svg width="27" height="20"><circle cx="9" cy="12" r="4.5" fill="#f6d29a"/><circle cx="18" cy="12" r="4.5" fill="#f6d29a"/><circle cx="10" cy="9" r="2" fill="#000"/><circle cx="17" cy="9" r="2" fill="#000"/><path d="M22 7l3 3" stroke="#999" stroke-width="0.6"/></svg></div>
<div class="a" style="left:826px;top:300px;width:27px;height:20px;background-color:#fff;background-image:linear-gradient(45deg,#e6e6e6 25%,transparent 25%,transparent 75%,#e6e6e6 75%),linear-gradient(45deg,#e6e6e6 25%,transparent 25%,transparent 75%,#e6e6e6 75%);background-size:6px 6px;background-position:0 0,3px 3px;overflow:hidden"><svg width="27" height="20"><path d="M7 16c-2-1-2-8 2-11s10-3 12 1 1 9-1 10" fill="none" stroke="#444" stroke-width="1"/><path d="M10 16v2M18 16v2" stroke="#444" stroke-width="1"/></svg></div>
<div class="t" style="left:866px;top:274px;font-size:10px;color:#eee">Lớp2</div>
<div class="t" style="left:866px;top:305px;font-size:10px;color:#eee">Lớp1</div>
<div class="a" style="left:990px;top:233px;width:14px;height:197px;background:#333"></div>
<div class="a" style="left:991px;top:243px;width:12px;height:176px;background:#6a6a6a;border-radius:5px"></div>
<svg class="a" style="left:990px;top:234px" width="13" height="10"><path d="M2 8h9l-4.5-6z" fill="#aaa"/></svg>
<div class="a" style="left:990px;top:420px;width:14px;height:10px;background:#2a2a2a"></div><svg class="a" style="left:990px;top:421px" width="14" height="9"><path d="M3 2h8l-4 5.5z" fill="#bbb"/></svg>
<div class="a" style="left:798px;top:430px;width:207px;height:25px;background:#262626"></div>
<div class="btn" style="left:803px;top:433px;width:18px;height:17px;background:#464646;box-shadow:inset 0 0 0 1px #353535"><svg width="18" height="17" style="position:absolute;left:0;top:0"><g transform="translate(0 -0.5)"><path d="M5 3h5.5L13 5.5V15H5z" fill="none" stroke="#e0e0e0" stroke-width="1.2"/><path d="M10.5 3v2.5H13" fill="none" stroke="#e0e0e0" stroke-width="1"/></g></svg></div>
<div class="btn" style="left:823px;top:433px;width:18px;height:17px;background:#464646;box-shadow:inset 0 0 0 1px #353535"><svg width="18" height="17" style="position:absolute;left:0;top:0"><g transform="translate(0 -0.5)"><path d="M5 3h5.5L13 5.5V15H5z" fill="none" stroke="#e0e0e0" stroke-width="1.2"/><path d="M10.5 3v2.5H13" fill="none" stroke="#e0e0e0" stroke-width="1"/><rect x="7" y="9" width="4" height="4" fill="none" stroke="#e0e0e0" stroke-width="1"/><path d="M7.8 9V8a1.2 1.2 0 0 1 2.4 0v1" fill="none" stroke="#e0e0e0" stroke-width="0.9"/></g></svg></div>
<div class="btn" style="left:844px;top:433px;width:18px;height:17px;background:#464646;box-shadow:inset 0 0 0 1px #353535"><svg width="18" height="17" style="position:absolute;left:0;top:0"><g transform="translate(0 -0.5)"><path d="M5 3h5.5L13 5.5V15H5z" fill="none" stroke="#e0e0e0" stroke-width="1.2"/><path d="M10.5 3v2.5H13" fill="none" stroke="#e0e0e0" stroke-width="1"/><path d="M9 7v6M8 8l1-1" stroke="#e0e0e0" stroke-width="1.1" fill="none"/></g></svg></div>
<div class="btn" style="left:865px;top:433px;width:24px;height:17px;background:#464646;box-shadow:inset 0 0 0 1px #353535"><svg width="24" height="17" style="position:absolute;left:0;top:0"><g transform="translate(3 -0.5)"><path d="M4 3h5L11 5v4" fill="none" stroke="#e0e0e0" stroke-width="1.2"/><path d="M4 3v11h4" fill="none" stroke="#e0e0e0" stroke-width="1.2"/><path d="M11 10v6M8 13h6" stroke="#e0e0e0" stroke-width="1.6"/><path d="M16.5 9h5l-2.5 3z" fill="#e0e0e0"/></g></svg></div>
<div class="btn" style="left:891px;top:433px;width:18px;height:17px;background:#464646;box-shadow:inset 0 0 0 1px #353535"><svg width="18" height="17" style="position:absolute;left:0;top:0"><g transform="translate(0 -0.5)"><path d="M3.5 5h4l1 1.5h6V14h-11z" fill="#e0e0e0"/></g></svg></div>
<div class="btn" style="left:918px;top:433px;width:18px;height:17px;background:#464646;box-shadow:inset 0 0 0 1px #353535"><svg width="18" height="17" style="position:absolute;left:0;top:0"><g transform="translate(0 -0.5)"><rect x="6.5" y="3.5" width="8" height="8" fill="none" stroke="#e0e0e0" stroke-width="1.2"/><rect x="3.5" y="6.5" width="8" height="8" fill="#464646" stroke="#e0e0e0" stroke-width="1.2"/></g></svg></div>
<div class="btn" style="left:939px;top:433px;width:18px;height:17px;background:#262626;box-shadow:inset 0 0 0 1px #353535"><svg width="18" height="17" style="position:absolute;left:0;top:0"><g transform="translate(0 -0.5)"><rect x="3" y="4" width="5" height="4" fill="#e0e0e0"/><rect x="3" y="11" width="5" height="4" fill="#e0e0e0"/><rect x="11" y="7.5" width="5" height="4" fill="#e0e0e0"/><path d="M8 6h1.5v7H8M9.5 9.5H11" stroke="#e0e0e0" fill="none"/></g></svg></div>
<div class="btn" style="left:966px;top:433px;width:17px;height:17px;background:#464646;box-shadow:inset 0 0 0 1px #353535"><svg width="17" height="17" style="position:absolute;left:0;top:0"><g transform="translate(-1 -0.5)"><path d="M4 5h10M7 5V3.5h4V5" fill="none" stroke="#e0e0e0" stroke-width="1.2"/><rect x="5" y="6" width="8" height="9" fill="none" stroke="#e0e0e0" stroke-width="1.3"/><path d="M7.5 7.5v6M10.5 7.5v6" stroke="#e0e0e0" stroke-width="1.1"/></g></svg></div>
<div class="a" style="left:913px;top:436px;width:1px;height:11px;background:#555"></div><div class="a" style="left:962px;top:436px;width:1px;height:11px;background:#555"></div>
<div class="a" style="left:798px;top:459px;width:207px;height:16px;background:#383634;border-top:1px solid #62727f"></div><div class="t" style="left:798px;top:464px;width:183px;text-align:center;font-size:9px;color:#c8c8c8">Reference</div><svg class="a" style="left:979px;top:461px" width="24" height="12"><rect x="2" y="3.8" width="5.8" height="5.8" fill="none" stroke="#ccc" stroke-width="1.3"/><path d="M5 6.5L8 3" stroke="#ccc" stroke-width="1.1"/><circle cx="8.6" cy="2.4" r="1.3" fill="#ccc"/><path d="M15.3 3.8l5.5 5.5M20.8 3.8l-5.5 5.5" stroke="#ddd" stroke-width="2.1"/></svg>
<div class="a" style="left:798px;top:475px;width:207px;height:24px;background:#2a2a2a"></div>
<div class="btn" style="left:802px;top:478px;width:18px;height:18px;background:#464646;box-shadow:inset 0 0 0 1px #353535"><svg width="18" height="18" style="position:absolute;left:0;top:0"><g transform="translate(0 0.0)"><path d="M4.5 11a3 3 0 0 1 .5-6a4 4 0 0 1 7.5-.5a3 3 0 0 1 1 6.5z" fill="#e0e0e0"/><path d="M9 8v7M6.5 10.5L9 8l2.5 2.5" stroke="#464646" stroke-width="1.6" fill="none"/><path d="M9 9v6" stroke="#e0e0e0" stroke-width="1.4"/><path d="M7 13l2 2.5 2-2.5" fill="#e0e0e0"/></g></svg></div>
<div class="btn" style="left:822px;top:478px;width:18px;height:18px;background:#464646;box-shadow:inset 0 0 0 1px #353535"><svg width="18" height="18" style="position:absolute;left:0;top:0"><g transform="translate(0 0.0)"><path d="M3.5 5h4l1 1.5h6V14h-11z" fill="#e0e0e0"/></g></svg></div>
<div class="btn" style="left:843px;top:478px;width:17px;height:18px;background:#262626;box-shadow:inset 0 0 0 1px #353535"><svg width="17" height="18" style="position:absolute;left:0;top:0"><g transform="translate(-1 0.0)"><path d="M5.5 5.5l7 7M12.5 5.5l-7 7" stroke="#e0e0e0" stroke-width="1.8"/></g></svg></div>
<div class="btn" style="left:870px;top:478px;width:17px;height:18px;background:#262626;box-shadow:inset 0 0 0 1px #353535"><svg width="17" height="18" style="position:absolute;left:0;top:0"><g transform="translate(-1 0.0)"><circle cx="8" cy="8" r="4.5" fill="none" stroke="#e0e0e0" stroke-width="1.5"/><path d="M11.5 11.5l3.5 3.5" stroke="#e0e0e0" stroke-width="2"/><path d="M6 8h4M8 6v4" stroke="#e0e0e0" stroke-width="1.3"/></g></svg></div>
<div class="btn" style="left:890px;top:478px;width:17px;height:18px;background:#262626;box-shadow:inset 0 0 0 1px #353535"><svg width="17" height="18" style="position:absolute;left:0;top:0"><g transform="translate(-1 0.0)"><rect x="3.5" y="4" width="11" height="10" fill="none" stroke="#e0e0e0" stroke-width="1.1"/><path d="M5 5.5l3 3M13 5.5l-3 3M5 12.5l3-3M13 12.5l-3-3" stroke="#e0e0e0" stroke-width="1.3"/></g></svg></div>
<div class="btn" style="left:911px;top:478px;width:17px;height:18px;background:#262626;box-shadow:inset 0 0 0 1px #353535"><svg width="17" height="18" style="position:absolute;left:0;top:0"><g transform="translate(-1 0.0)"><circle cx="8" cy="8" r="4.5" fill="none" stroke="#e0e0e0" stroke-width="1.5"/><path d="M11.5 11.5l3.5 3.5" stroke="#e0e0e0" stroke-width="2"/><path d="M6 8h4" stroke="#e0e0e0" stroke-width="1.3"/></g></svg></div>
<div class="btn" style="left:937px;top:478px;width:18px;height:18px;background:#262626;box-shadow:inset 0 0 0 1px #353535"><svg width="18" height="18" style="position:absolute;left:0;top:0"><g transform="translate(0 0.0)"><path d="M4 15l6.5-6.5 1.5 1.5L5.5 16.5H4z" fill="none" stroke="#e0e0e0" stroke-width="1.3"/><path d="M10 7l2.5 2.5M11.5 5.5l2-2 2.5 2.5-2 2" stroke="#e0e0e0" stroke-width="1.8"/></g></svg></div>
<div class="btn" style="left:958px;top:478px;width:18px;height:18px;background:#5a9fd8;box-shadow:inset 0 0 0 1px #353535"><svg width="18" height="18" style="position:absolute;left:0;top:0"><g transform="translate(0 0.0)"><path d="M6 15c-2-2-3-4-3-5s1-1 1.5 0L6 12V5c0-1 1.5-1 1.5 0v5V3.5c0-1 1.5-1 1.5 0V10V4c0-1 1.5-1 1.5 0v6V5.5c0-1 1.5-1 1.5 0V12c0 2-1 3.5-2 4z" fill="#fff"/></g></svg></div>
<div class="a" style="left:865px;top:482px;width:1px;height:10px;background:#555"></div><div class="a" style="left:932px;top:482px;width:1px;height:10px;background:#555"></div><div class="a" style="left:980px;top:482px;width:1px;height:10px;background:#555"></div>
<div class="a" style="left:997px;top:478px;width:7px;height:19px;background:#4a4a4a;border-radius:2px"></div>
<div class="a" style="left:798px;top:500px;width:207px;height:17px;background:#f6f6f6;background-image:linear-gradient(45deg,#e4e4e4 25%,transparent 25%,transparent 75%,#e4e4e4 75%),linear-gradient(45deg,#e4e4e4 25%,transparent 25%,transparent 75%,#e4e4e4 75%);background-size:6px 6px;background-position:0 0,3px 3px"></div>
<div id="status" class="a">
  <div class="t" style="left:5px;top:4px;font-size:9px;color:#c8c8c8">4000 * 3000 pixel&nbsp;&nbsp;(29 * 21.8cm)&nbsp;&nbsp;350 dpi&nbsp;&nbsp;18 %&nbsp;&nbsp;( 4038, 2392 )</div>
</div>
<div id="task" class="a">
  <svg class="a" style="left:8px;top:6px" width="13" height="13"><path d="M0 1.5L5.5 0.8V6H0zM6.5 0.6L13 0V6H6.5zM0 7h5.5v5.2L0 11.5zM6.5 7H13v6l-6.5-0.7z" fill="#111"/></svg>
  <svg class="a" style="left:35px;top:5px" width="15" height="15"><circle cx="9" cy="6" r="4.5" fill="none" stroke="#111" stroke-width="1.4"/><path d="M5.8 9.2L1.5 13.5" stroke="#111" stroke-width="1.5"/></svg>
  <svg class="a" style="left:63px;top:5px" width="14" height="14"><circle cx="7" cy="7" r="5.2" fill="none" stroke="#111" stroke-width="1.8"/></svg>
  <svg class="a" style="left:90px;top:5px" width="15" height="14"><rect x="3" y="3" width="7" height="8" fill="none" stroke="#111" stroke-width="1.4"/><path d="M1 1.5h11M1 12.5h11M13 2v2M13 6v2M13 10v2" stroke="#111" stroke-width="1.4"/></svg>
  <svg class="a" style="left:121px;top:5px" width="15" height="14"><path d="M1 3h5l1 1.5h7V13H1z" fill="#e8b53a"/><path d="M1 6h13v7H1z" fill="#f5cf55"/><rect x="5" y="8" width="5" height="5" fill="#2f7fc8"/></svg>
  <svg class="a" style="left:150px;top:5px" width="14" height="14"><circle cx="7" cy="7" r="6" fill="#d22"/><circle cx="7" cy="7" r="4" fill="#fff"/><path d="M5 5h4v1.5H6.5v1h2v1.2h-2v1H9V11H5z" fill="#d22"/></svg>
  <svg class="a" style="left:178px;top:5px" width="16" height="14"><rect x="1" y="1" width="14" height="9" fill="#3f8fd8"/><rect x="2" y="2" width="12" height="7" fill="#7cc0f0"/><path d="M6 12h4M8 10v2" stroke="#333" stroke-width="1.2"/></svg>
  <svg class="a" style="left:206px;top:4px" width="16" height="16"><circle cx="8" cy="8" r="7" fill="#1d8fd6"/><path d="M4 9 a4.5 4.5 0 0 1 9-1 H6.5 a2.3 2.3 0 0 0 4.5 1.8 l2 .8 a6 6 0 0 1-9-1.6z" fill="#5ee06b"/></svg>
  <div class="a" style="left:205px;top:21px;width:18px;height:2px;background:#4a90d0"></div>
  <svg class="a" style="left:235px;top:5px" width="15" height="14"><rect x="3" y="1" width="11" height="12" fill="#1f7a45"/><rect x="1" y="3" width="8" height="8" fill="#e8f5ec" stroke="#1f7a45"/><path d="M3 5l4 4M7 5l-4 4" stroke="#1f7a45" stroke-width="1.3"/></svg>
  <svg class="a" style="left:264px;top:5px" width="15" height="14"><rect x="3" y="1" width="11" height="12" fill="#2b5fb4"/><rect x="1" y="3" width="9" height="8" fill="#e8eefa" stroke="#2b5fb4"/><path d="M2.5 5l1.5 5 1.5-4 1.5 4 1.5-5" fill="none" stroke="#2b5fb4" stroke-width="1"/></svg>
  <svg class="a" style="left:292px;top:5px" width="15" height="14"><rect x="3" y="1" width="11" height="12" fill="#d24726"/><rect x="1" y="3" width="9" height="8" fill="#fde9e3" stroke="#d24726"/><path d="M4 10V5h2.5a1.5 1.5 0 0 1 0 3H4" fill="none" stroke="#d24726" stroke-width="1.2"/></svg>
  <svg class="a" style="left:321px;top:4px" width="16" height="16"><circle cx="8" cy="8" r="7" fill="#db4437"/><path d="M8 8L14.5 8A6.5 6.5 0 0 1 4.7 13.6z" fill="#0f9d58"/><path d="M8 8L4.7 13.6A6.5 6.5 0 0 1 2.2 4.5z" fill="#f4b400"/><circle cx="8" cy="8" r="3" fill="#fff"/><circle cx="8" cy="8" r="2.2" fill="#4285f4"/></svg>
  <div class="a" style="left:320px;top:21px;width:18px;height:2px;background:#4a90d0"></div>
  <div class="a" style="left:342px;top:0;width:29px;height:23px;background:#eef3f8"></div>
  <svg class="a" style="left:349px;top:4px" width="16" height="16"><circle cx="8" cy="8" r="5" fill="#fff"/><circle cx="7.5" cy="9" r="3.5" fill="#1d9b52"/><path d="M4 7a4 4 0 0 1 5-3" stroke="#e33" stroke-width="1.5" fill="none"/></svg>
  <div class="a" style="left:347px;top:21px;width:19px;height:2px;background:#4a90d0"></div>
  <svg class="a" style="left:662px;top:4px" width="18" height="16"><path d="M4 11a3.5 3.5 0 0 1 1-6.8a4.5 4.5 0 0 1 8.5 1.3a2.8 2.8 0 0 1-.5 5.5z" fill="#c8dcec"/><path d="M6 13l-1 2M9 13l-1 2M12 13l-1 2" stroke="#5aa0d8" stroke-width="1.2"/></svg>
  <div class="t" style="left:686px;top:7px;font-size:10.5px;color:#111">79°F&nbsp; Light rain</div>
  <svg class="a" style="left:766px;top:7px" width="10" height="8"><path d="M1 6.5L5 2.5l4 4" fill="none" stroke="#111" stroke-width="1.3"/></svg>
  <svg class="a" style="left:784px;top:6px" width="14" height="11"><rect x="4" y="2" width="9" height="7" fill="none" stroke="#111" stroke-width="1.2"/><rect x="5.5" y="3.5" width="3" height="4" fill="#111"/><path d="M1 4v3M2 5.5h2" stroke="#111"/></svg>
  <svg class="a" style="left:802px;top:5px" width="14" height="13"><rect x="1" y="1" width="12" height="10" fill="none" stroke="#111" stroke-width="1.3"/><circle cx="6" cy="6" r="2.5" fill="none" stroke="#111"/><circle cx="11" cy="10" r="2.5" fill="#f28c1e"/></svg>
  <svg class="a" style="left:821px;top:5px" width="16" height="13"><path d="M1 4.5h3l4-3.5v11l-4-3.5H1z" fill="none" stroke="#111" stroke-width="1.1"/><path d="M10 4a3 3 0 0 1 0 5M12 2a6 6 0 0 1 0 9" fill="none" stroke="#111" stroke-width="1.1"/></svg>
  <svg class="a" style="left:841px;top:5px" width="14" height="13"><path d="M2 12a1 1 0 0 1 0-.1M2 9a3 3 0 0 1 3 3M2 6a6 6 0 0 1 6 6M2 3a9 9 0 0 1 9 9" fill="none" stroke="#111" stroke-width="1.2"/></svg>
  <svg class="a" style="left:858px;top:4px" width="14" height="15"><path d="M6 2a5 5 0 1 0 0 11" fill="none" stroke="#111" stroke-width="1.3"/><rect x="6" y="5" width="6" height="6" fill="none" stroke="#111" stroke-width="1.2"/></svg>
  <div class="t" style="left:878px;top:7px;font-size:9.5px;color:#111">ENG</div>
  <div class="t" style="left:908px;top:7px;font-size:9.5px;color:#111">7:35 AM</div>
  <svg class="a" style="left:958px;top:4px" width="14" height="15"><path d="M1 1h12v9H8l-1 2.5L6 10H1z" fill="#111"/><path d="M3.5 3.5h7M3.5 5.5h7M3.5 7.5h5" stroke="#d9e4ee" stroke-width="1"/></svg>
</div>
</body></html>
